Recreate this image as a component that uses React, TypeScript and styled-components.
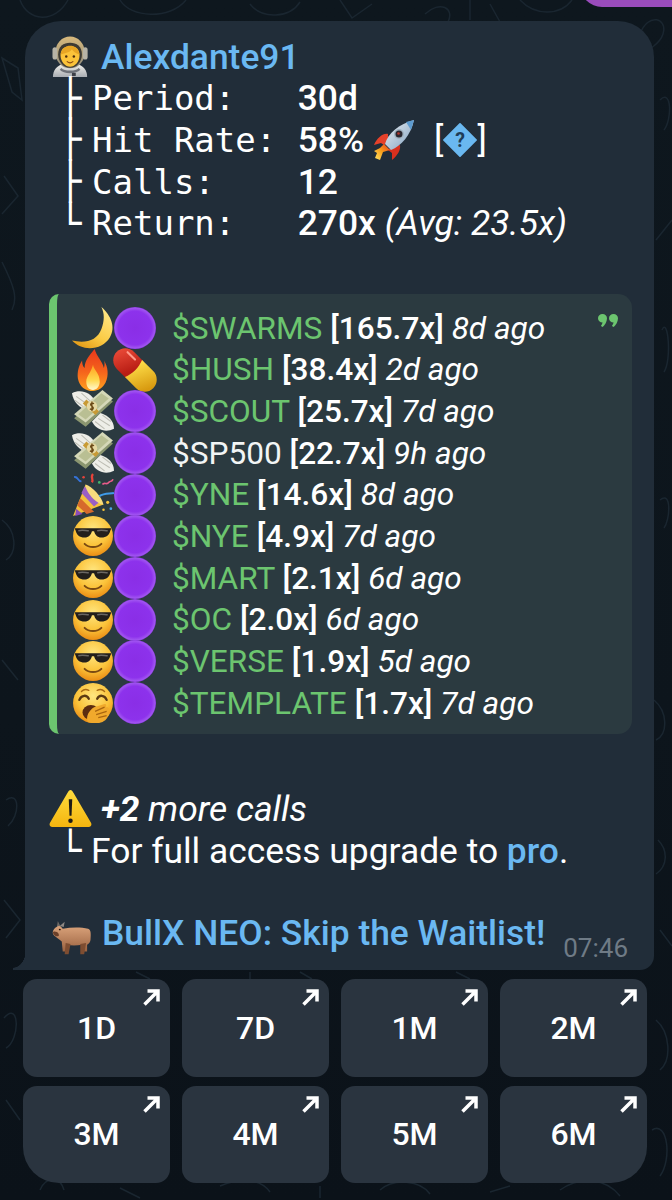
import React from 'react'
import styled, { createGlobalStyle } from 'styled-components'

const GlobalStyle = createGlobalStyle`
  html, body {
    margin: 0;
    padding: 0;
    background: #0d151c;
  }
  * {
    box-sizing: border-box;
  }
`

type EmojiName =
  | 'astronaut' | 'rocket' | 'moon' | 'pill' | 'fire' | 'money' | 'party'
  | 'cool' | 'yawn' | 'warning' | 'ox' | 'purple' | 'help'

const FACE = (
  <radialGradient id="faceFill" cx="50%" cy="32%" r="70%">
    <stop offset="0%" stopColor="#ffe680" />
    <stop offset="60%" stopColor="#fbc33a" />
    <stop offset="100%" stopColor="#e98a12" />
  </radialGradient>
)

const art: Record<EmojiName, React.ReactNode> = {
  purple: (
    <>
      <defs>
        <radialGradient id="purpleFill" cx="50%" cy="50%" r="50%">
          <stop offset="0%" stopColor="#8a2ee6" />
          <stop offset="80%" stopColor="#8d32ec" />
          <stop offset="95%" stopColor="#a054f0" />
          <stop offset="100%" stopColor="#8a3adf" />
        </radialGradient>
      </defs>
      <circle cx="20" cy="20" r="20" fill="url(#purpleFill)" />
    </>
  ),
  moon: (
    <>
      <defs>
        <linearGradient id="moonFill" x1="0.8" y1="0" x2="0.2" y2="1">
          <stop offset="0%" stopColor="#ffe98a" />
          <stop offset="60%" stopColor="#fbcb45" />
          <stop offset="100%" stopColor="#e39a16" />
        </linearGradient>
      </defs>
      <path d="M28 0C37 8 42 19 36 29C29 41 10 43 0 32C13 35 24 32 28 21C31 13 31 6 28 0Z" fill="url(#moonFill)" />
    </>
  ),
  fire: (
    <>
      <defs>
        <linearGradient id="fireFill" x1="0.5" y1="0" x2="0.5" y2="1">
          <stop offset="0%" stopColor="#e8381c" />
          <stop offset="55%" stopColor="#f5641c" />
          <stop offset="100%" stopColor="#ffa11f" />
        </linearGradient>
        <linearGradient id="fireCore" x1="0.5" y1="0" x2="0.5" y2="1">
          <stop offset="0%" stopColor="#ff9e1f" />
          <stop offset="60%" stopColor="#ffd84d" />
          <stop offset="100%" stopColor="#fff8d0" />
        </linearGradient>
      </defs>
      <g transform="translate(4 0) scale(0.8 1)">
        <path d="M22 0C24 7 31 11 33 18C34 15 34 13 33 11C38 17 39 25 35 32C32 37 26 40 20 40C11 40 4 36 2 28C1 22 3 16 7 11C7 14 8 17 10 18C10 11 16 6 22 0Z" fill="url(#fireFill)" />
        <path d="M20 15C21 20 28 23 28 31C28 36 24 39 20 39C15 39 12 36 12 31C12 26 18 22 20 15Z" fill="url(#fireCore)" />
      </g>
    </>
  ),
  pill: (
    <>
      <defs>
        <linearGradient id="pillRed" x1="0" y1="0" x2="1" y2="0.4">
          <stop offset="0%" stopColor="#f0503c" />
          <stop offset="100%" stopColor="#b81d14" />
        </linearGradient>
        <linearGradient id="pillYellow" x1="0" y1="0" x2="1" y2="0.4">
          <stop offset="0%" stopColor="#ffe04a" />
          <stop offset="100%" stopColor="#d89a10" />
        </linearGradient>
      </defs>
      <g transform="rotate(45 20 20)">
        <path d="M21 8.500H7A11.500 11.500 0 0 0 7 31.500H21Z" fill="url(#pillRed)" />
        <path d="M18 8.500H33A11.500 11.500 0 0 1 33 31.500H18C21 24 21 16 18 8.500Z" fill="url(#pillYellow)" />
        <path d="M3 13H13" stroke="#ff9a8a" strokeWidth="2" strokeLinecap="round" />
      </g>
    </>
  ),
  money: (
    <>
      <path d="M0 3C8 -1 18 2 22 11L14 19C7 17 1 11 0 3Z" fill="#eeeee8" />
      <path d="M4 6L15 14M3 10L11 16M9 3L18 11" stroke="#bdbdb4" strokeWidth="1" />
      <path d="M40 37C32 41 23 38 19 30L27 22C34 24 40 29 40 37Z" fill="#eeeee8" />
      <path d="M36 34L25 27M37 30L29 24M31 37L22 30" stroke="#bdbdb4" strokeWidth="1" />
      <path d="M29 3L39 11L13 35L2 27Z" fill="#8b9670" />
      <path d="M29 0L39 8L13 31L2 23Z" fill="#d5d8b8" />
      <path d="M28 3L35 8L13 28L6 23Z" fill="#b9bf93" />
      <path d="M12 11L24 22" stroke="#c89a35" strokeWidth="5" />
      <circle cx="19" cy="15.500" r="5" fill="#e6d9a3" />
      <path d="M21 13C18 11.500 16.500 14 19 15.500C21.500 17 20 19.500 17 18M19 11V20" stroke="#6b4a17" strokeWidth="1.200" fill="none" />
    </>
  ),
  party: (
    <>
      <path d="M1 40L13 10L30 29Z" fill="#f4c13b" />
      <path d="M8 23L21 36L14 38L5 30Z" fill="#d66a2c" />
      <path d="M12 12L27 26L21 31L9 18Z" fill="#9a5fc4" />
      <path d="M4 33L10 38L3 40Z" fill="#8a4db8" />
      <path d="M13 10C19 12 28 21 30 29C25 30 12 17 13 10Z" fill="#f7dc7d" />
      <path d="M26 21C31 18 36 19 40 18" stroke="#3f9be8" strokeWidth="2" fill="none" />
      <path d="M19 8C21 5 17 3 20 0" stroke="#e8433a" strokeWidth="2.200" fill="none" />
      <path d="M29 10C31 7 33 11 35 8C37 6 38 8 39 5" stroke="#e85b8a" strokeWidth="1.600" fill="none" />
      <path d="M2 3C6 2 5 7 9 7" stroke="#3573d9" strokeWidth="1.800" fill="none" />
      <circle cx="34" cy="27" r="1.500" fill="#f5c33b" />
      <circle cx="37" cy="33" r="1.300" fill="#4aa3e8" />
      <circle cx="30" cy="34" r="1.200" fill="#f5c33b" />
      <circle cx="26" cy="8" r="1.300" fill="#43b56b" />
      <circle cx="11" cy="3" r="1.200" fill="#e8433a" />
    </>
  ),
  cool: (
    <>
      <defs>{FACE}</defs>
      <circle cx="20" cy="20" r="19" fill="url(#faceFill)" />
      <path d="M2.500 12.500H37.500L36.500 15C35.500 19 33 21.500 28 21.500C24 21.500 22 19 21 15.500H19C18 19 16 21.500 12 21.500C7 21.500 4.500 19 3.500 15Z" fill="#231f1c" />
      <path d="M6 15C10 14 13 15 16 15M24 15C28 14 31 15 34 15" stroke="#6b6763" strokeWidth="1.400" fill="none" />
      <path d="M12 27.500C16 31.500 24 31.500 28 27.500" stroke="#7a4a12" strokeWidth="1.800" strokeLinecap="round" fill="none" />
    </>
  ),
  yawn: (
    <>
      <defs>{FACE}</defs>
      <circle cx="20" cy="20" r="19" fill="url(#faceFill)" />
      <path d="M7 17C9 12 14 12 16 16M24 16C26 12 31 12 33 17" stroke="#5b3a12" strokeWidth="2.200" strokeLinecap="round" fill="none" />
      <path d="M9 9C11 7 14 7 16 8M24 8C26 7 29 7 31 9" stroke="#a86a14" strokeWidth="1.300" strokeLinecap="round" fill="none" />
      <ellipse cx="18" cy="29" rx="8" ry="7" fill="#5b2c10" />
      <path d="M15 38C13 33 16 27 21 24L31 21C33 21 33 23 32 24L34 24C36 25 35 27 34 28L35 29C36 31 35 32 34 33C33 36 29 39 24 39C20 39 17 39 15 38Z" fill="#f0a92c" />
      <path d="M22 28L31 24M23 31L33 28M25 34L33 32" stroke="#a8650f" strokeWidth="1.200" fill="none" />
    </>
  ),
  warning: (
    <>
      <defs>
        <linearGradient id="warnFill" x1="0.5" y1="0" x2="0.5" y2="1">
          <stop offset="0%" stopColor="#ffdc3d" />
          <stop offset="100%" stopColor="#f5b50f" />
        </linearGradient>
      </defs>
      <path d="M20 1C21 1 22 2 23 4L40 33C41 35 40 37 38 37H2C0 37 -1 35 0 33L17 4C18 2 19 1 20 1Z" fill="url(#warnFill)" />
      <path d="M18.300 10H21.700L21 26H19Z" fill="#1d1a16" />
      <circle cx="20" cy="31" r="2.200" fill="#1d1a16" />
    </>
  ),
  astronaut: (
    <>
      <defs>
        <linearGradient id="suitFill" x1="0.5" y1="0" x2="0.5" y2="1">
          <stop offset="0%" stopColor="#f4f2ec" />
          <stop offset="100%" stopColor="#a9adb3" />
        </linearGradient>
        <linearGradient id="helmetFill" x1="0.5" y1="0" x2="0.5" y2="1">
          <stop offset="0%" stopColor="#d8b97c" />
          <stop offset="100%" stopColor="#8d8a7c" />
        </linearGradient>
      </defs>
      <path d="M1 40C1 33 5 29 12 27H26C33 29 37 33 37 40Z" fill="url(#suitFill)" />
      <circle cx="19" cy="16" r="15.500" fill="url(#helmetFill)" />
      <rect x="0.500" y="11" width="5" height="12" rx="2.500" fill="#b7b3a6" />
      <rect x="32.500" y="11" width="5" height="12" rx="2.500" fill="#b7b3a6" />
      <path d="M6.500 18C6.500 10 12 6.500 19 6.500C26 6.500 31.500 10 31.500 18C31.500 25 26 31 19 31C12 31 6.500 25 6.500 18Z" fill="#3d3a33" />
      <path d="M9 19C9 13 13 10 19 10C25 10 29 13 29 19C29 25 24 30 19 30C14 30 9 25 9 19Z" fill="#fbc33a" />
      <path d="M9 18C10 12 15 9.500 19 9.500C24 9.500 28 12 29 18C25 17 22 15 21 13C19 16 14 17 9 18Z" fill="#e7a524" />
      <circle cx="15" cy="20" r="1.300" fill="#4a2c0d" />
      <circle cx="23" cy="20" r="1.300" fill="#4a2c0d" />
      <path d="M16 25C18 26.500 20 26.500 22 25" stroke="#8a4a12" strokeWidth="1.200" fill="none" strokeLinecap="round" />
      <path d="M9 32C13 36 25 36 29 32" stroke="#6f7279" strokeWidth="2.500" fill="none" />
      <rect x="21" y="36" width="4" height="3" fill="#3d3f46" />
    </>
  ),
  rocket: (
    <>
      <defs>
        <linearGradient id="hullFill" x1="0" y1="0" x2="1" y2="1">
          <stop offset="0%" stopColor="#eef1f4" />
          <stop offset="100%" stopColor="#7d9fc0" />
        </linearGradient>
        <linearGradient id="flameFill" x1="1" y1="0" x2="0" y2="1">
          <stop offset="0%" stopColor="#e8361c" />
          <stop offset="50%" stopColor="#f8a01c" />
          <stop offset="100%" stopColor="#ffe86a" />
        </linearGradient>
      </defs>
      <path d="M14 14C9 13 3 18 0 25L7 23L10 25L14 21Z" fill="#e5412a" />
      <path d="M26 25C27 30 23 36 18 40L18 33L14 30L20 26Z" fill="#d9301e" />
      <path d="M10 24L16 30L9 32L6 40L1 38L3 33L0 31L6 28Z" fill="url(#flameFill)" />
      <path d="M11 24C14 13 25 4 40 0C37 15 27 26 17 30Z" fill="url(#hullFill)" />
      <path d="M32 2L40 0C39 3 38 7 37 10Z" fill="#5d9bd0" />
      <circle cx="25" cy="14" r="5" fill="#9fb2c0" />
      <circle cx="25" cy="14" r="3.500" fill="#2b2730" />
      <circle cx="24.500" cy="13.500" r="1.300" fill="#b2362c" />
    </>
  ),
  help: (
    <>
      <path d="M20 1L39 20L20 39L1 20Z" fill="#6ab8f0" stroke="#6ab8f0" strokeWidth="2" strokeLinejoin="round" />
      <text x="20" y="28" textAnchor="middle" fontFamily="Roboto, sans-serif" fontWeight="700" fontSize="23" fill="#1f3d58">?</text>
    </>
  ),
  ox: (
    <>
      <defs>
        <linearGradient id="oxFill" x1="0.5" y1="0" x2="0.5" y2="1">
          <stop offset="0%" stopColor="#d9a27a" />
          <stop offset="100%" stopColor="#9a6240" />
        </linearGradient>
      </defs>
      <path d="M6 0L9 7L5 7Z" fill="#6f6a66" />
      <path d="M13 1L12 7L8 6Z" fill="#8d8884" />
      <path d="M11 9C20 7 30 7 37 9C40 10 40 15 39.500 22C39 26 37 27 36 28L36 36L33 36L31 28C25 29 20 29 15 28L14 36L11 36L10 24C7 21 2 18 1 15C0 12 3 7 7 6C9 6 10 8 11 9Z" fill="url(#oxFill)" />
      <path d="M14 26L13 39H17L19 27ZM29 27L29 39H33L35 26Z" fill="#7e4d31" />
      <path d="M1 14C2 17 4 18 6 18C8 18 7 14 5 13C3 12 1 12 1 14Z" fill="#6b3f28" />
      <circle cx="8" cy="10" r="1" fill="#24140c" />
    </>
  ),
}

const Emoji = ({ name, size = 40, height }: { name: EmojiName; size?: number; height?: number }) => (
  <EmojiBox viewBox="0 0 40 40" $w={size} $h={height ?? size} preserveAspectRatio="none" aria-hidden="true">
    {art[name]}
  </EmojiBox>
)

type Call = {
  lead: EmojiName
  tail: EmojiName
  ticker: string
  white?: boolean
  mult: string
  age: string
}

const calls: Call[] = [
  { lead: 'moon', tail: 'purple', ticker: '$SWARMS', mult: '165.7x', age: '8d ago' },
  { lead: 'fire', tail: 'pill', ticker: '$HUSH', mult: '38.4x', age: '2d ago' },
  { lead: 'money', tail: 'purple', ticker: '$SCOUT', mult: '25.7x', age: '7d ago' },
  { lead: 'money', tail: 'purple', ticker: '$SP500', white: true, mult: '22.7x', age: '9h ago' },
  { lead: 'party', tail: 'purple', ticker: '$YNE', mult: '14.6x', age: '8d ago' },
  { lead: 'cool', tail: 'purple', ticker: '$NYE', mult: '4.9x', age: '7d ago' },
  { lead: 'cool', tail: 'purple', ticker: '$MART', mult: '2.1x', age: '6d ago' },
  { lead: 'cool', tail: 'purple', ticker: '$OC', mult: '2.0x', age: '6d ago' },
  { lead: 'cool', tail: 'purple', ticker: '$VERSE', mult: '1.9x', age: '5d ago' },
  { lead: 'yawn', tail: 'purple', ticker: '$TEMPLATE', mult: '1.7x', age: '7d ago' },
]

const buttons = ['1D', '7D', '1M', '2M', '3M', '4M', '5M', '6M']

const App = () => {
  return (
    <Page>
      <GlobalStyle />
      <Doodles viewBox="0 0 672 1200" aria-hidden="true">
        <path d="M20 0C28 22 55 24 68 0M120 0C130 18 170 20 186 0M250 4C262 20 290 18 300 2M340 0L352 18L372 4M425 14C440 0 455 8 448 22M470 0V20M490 4L500 22M520 0C535 16 560 16 572 0" />
        <path d="M640 34C648 12 668 18 663 34C660 44 646 52 640 54C634 50 624 44 626 34C628 28 636 28 640 34Z" />
        <path d="M2 58L18 68L22 100L12 92ZM4 176L18 196L2 214M2 262C14 286 18 298 12 310" />
        <path d="M660 100C672 88 672 120 664 130M656 240L672 220M662 330C668 316 672 360 664 372M660 500C672 490 670 520 664 528" />
        <path d="M2 520C16 530 18 552 6 560M2 660L18 680M6 800C20 790 20 816 8 826M4 900L20 920L6 938" />
        <path d="M654 700C668 712 668 734 656 740M658 840C668 850 668 866 656 874M660 930L672 946" />
        <path d="M4 1018C20 1000 20 1040 6 1048M6 1100L20 1120M40 1190C46 1176 60 1176 64 1190M120 1188L140 1198M220 1186C240 1178 260 1178 270 1192M320 1186V1198M380 1190C394 1178 420 1180 430 1194M490 1192L510 1186M560 1190C580 1176 606 1178 620 1196" />
        <path d="M656 1020C670 1032 672 1060 660 1070M652 1130C668 1120 672 1160 660 1176M136 972L150 979M250 972V979M300 972L312 979M456 972L470 979" />
      </Doodles>
      <OutgoingEdge />
      <Column>
        <Bubble>
          <Line>
            <Emoji name="astronaut" size={38} height={41} />
            <Sender>Alexdante91</Sender>
          </Line>
          <Line>
            <Branch>├</Branch>
            <Label>{'Period:   '}</Label>
            <Value>30d</Value>
          </Line>
          <Line>
            <Branch>├</Branch>
            <Label>{'Hit Rate: '}</Label>
            <Value>58%</Value>
            <InlineIcon>
              <Emoji name="rocket" size={40} />
            </InlineIcon>
            <Bracket>[</Bracket>
            <Emoji name="help" size={34} />
            <Bracket>]</Bracket>
          </Line>
          <Line>
            <Branch>├</Branch>
            <Label>{'Calls:    '}</Label>
            <Value>12</Value>
          </Line>
          <Line>
            <Branch>└</Branch>
            <Label>{'Return:   '}</Label>
            <Value>270x</Value>
            <Note>(Avg: 23.5x)</Note>
          </Line>

          <Quote>
            <QuoteMark viewBox="0 0 20 13" aria-hidden="true">
              <path d="M4.500 0C7 0 9 1.800 9 4.300C9 7.800 7 11 4.700 13L2.900 12C3.700 10.800 4.300 9.700 4.600 8.500C2 8.500 0 6.700 0 4.300C0 1.800 2 0 4.500 0Z" />
              <path d="M15.500 0C18 0 20 1.800 20 4.300C20 7.800 18 11 15.700 13L13.900 12C14.700 10.800 15.300 9.700 15.600 8.500C13 8.500 11 6.700 11 4.300C11 1.800 13 0 15.500 0Z" />
            </QuoteMark>
            {calls.map((call) => (
              <CallRow key={call.ticker}>
                <Emoji name={call.lead} size={42} />
                <Emoji name={call.tail} size={42} />
                <CallText>
                  <Ticker $white={call.white}>{call.ticker}</Ticker>{' '}
                  <Mult>[{call.mult}]</Mult> <Age>{call.age}</Age>
                </CallText>
              </CallRow>
            ))}
          </Quote>

          <WarningLine>
            <Emoji name="warning" size={41} />
            <More>
              <b>+2</b> more calls
            </More>
          </WarningLine>
          <Line>
            <Branch>└</Branch>
            <Upgrade>
              For full access upgrade to <Blue>pro</Blue>.
            </Upgrade>
          </Line>

          <FooterLine>
            <OxSlot>
              <Emoji name="ox" size={39} height={34} />
            </OxSlot>
            <Sender>BullX NEO: Skip the Waitlist!</Sender>
            <Time>07:46</Time>
          </FooterLine>
        </Bubble>

        <Keyboard>
          {buttons.map((label) => (
            <KeyButton key={label}>
              {label}
              <KeyArrow viewBox="0 0 17 17" aria-hidden="true">
                <path d="M1.500 15.500L14.500 2.500M4.500 2H15V12.500" />
              </KeyArrow>
            </KeyButton>
          ))}
        </Keyboard>
      </Column>
    </Page>
  )
}

export default App

const Page = styled.div`
  position: relative;
  width: 672px;
  height: 1200px;
  overflow: hidden;
  background: linear-gradient(180deg, #0e171e 0%, #0d151c 60%, #0b1219 100%);
  font-family: Roboto, 'Liberation Sans', sans-serif;
  color: #fff;
`

const Doodles = styled.svg`
  position: absolute;
  inset: 0;
  width: 672px;
  height: 1200px;
  fill: none;
  stroke: #1a2630;
  stroke-width: 1.500;
`

const OutgoingEdge = styled.div`
  position: absolute;
  top: -20px;
  right: -30px;
  width: 122px;
  height: 27px;
  background: #9a4cbc;
  border-radius: 0 0 0 22px;
`

const Column = styled.div`
  position: relative;
  display: flex;
  flex-direction: column;
  padding: 21px 0 0;
`

const Bubble = styled.div`
  position: relative;
  width: 629px;
  height: 949px;
  margin-left: 25px;
  padding: 15px 26px 0 27px;
  background: #212d39;
  border-radius: 36px 36px 14px 0;

  &::before {
    content: '';
    position: absolute;
    left: -12px;
    bottom: 0;
    width: 13px;
    height: 20px;
    background: radial-gradient(ellipse 13px 18px at 0 0, transparent 97%, #212d39 100%);
  }
`

const EmojiBox = styled.svg<{ $w: number; $h: number }>`
  flex: none;
  display: block;
  width: ${(p) => p.$w}px;
  height: ${(p) => p.$h}px;
  overflow: visible;
`

const Line = styled.div`
  display: flex;
  align-items: center;
  height: 41.670px;
  font-size: 35.400px;
  white-space: pre;
`

const Sender = styled.span`
  margin-left: 11px;
  font-weight: 500;
  color: #6ab8f2;
`

const Branch = styled.span`
  flex: none;
  width: 33px;
  margin-left: 7px;
  font-family: 'DejaVu Sans Mono', monospace;
  font-size: 37px;
  line-height: 41.670px;
`

const Label = styled.span`
  font-family: 'DejaVu Sans Mono', monospace;
  font-size: 34px;
`

const Value = styled.span`
  margin-left: 1px;
  font-weight: 500;
`

const InlineIcon = styled.span`
  margin: 0 20px 0 10px;
`

const Bracket = styled.span`
  color: #fff;
`

const Note = styled.em`
  margin-left: 9px;
`

const Quote = styled.div`
  position: relative;
  width: 583px;
  height: 440px;
  margin: 50px 0 0 -3px;
  padding: 13px 0 0 15px;
  background: #2b3a40;
  border-left: 8px solid #6cc56f;
  border-radius: 10px 14px 14px 10px;
`

const QuoteMark = styled.svg`
  position: absolute;
  top: 20px;
  right: 14px;
  width: 20px;
  height: 13px;
  fill: #6cc56f;
`

const CallRow = styled.div`
  display: flex;
  align-items: center;
  height: 41.670px;
  font-size: 31.600px;
  white-space: pre;
`

const CallText = styled.span`
  margin-left: 16px;
`

const Ticker = styled.span<{ $white?: boolean }>`
  color: ${(p) => (p.$white ? '#f2f5f5' : '#6cc56f')};
`

const Mult = styled.span`
  font-weight: 500;
`

const Age = styled.em`
  font-style: italic;
`

const WarningLine = styled(Line)`
  margin-top: 54px;
  margin-left: -2px;
`

const More = styled.em`
  margin-left: 10px;

  b {
    font-weight: 700;
  }
`

const Upgrade = styled.span`
  margin-left: -1px;
`

const Blue = styled.span`
  font-weight: 500;
  color: #6ab8f2;
`

const FooterLine = styled(Line)`
  margin-top: 41px;
`

const OxSlot = styled.span`
  margin-top: 10px;
`

const Time = styled.span`
  margin-left: auto;
  align-self: flex-end;
  margin-bottom: -9px;
  font-size: 26px;
  line-height: 30px;
  color: #6f7b86;
`

const Keyboard = styled.div`
  display: grid;
  grid-template-columns: repeat(4, 147px);
  grid-auto-rows: 97.500px;
  gap: 9px 12px;
  margin: 9px 0 0 23px;
`

const KeyButton = styled.div`
  position: relative;
  display: flex;
  align-items: center;
  justify-content: center;
  background: #2a343f;
  border-radius: 14px;
  font-size: 32px;
  font-weight: 500;

  &:nth-child(5) {
    border-bottom-left-radius: 36px;
  }

  &:nth-child(8) {
    border-bottom-right-radius: 36px;
  }
`

const KeyArrow = styled.svg`
  position: absolute;
  top: 10px;
  right: 10px;
  width: 17px;
  height: 17px;
  fill: none;
  stroke: #fff;
  stroke-width: 3.500;
`
